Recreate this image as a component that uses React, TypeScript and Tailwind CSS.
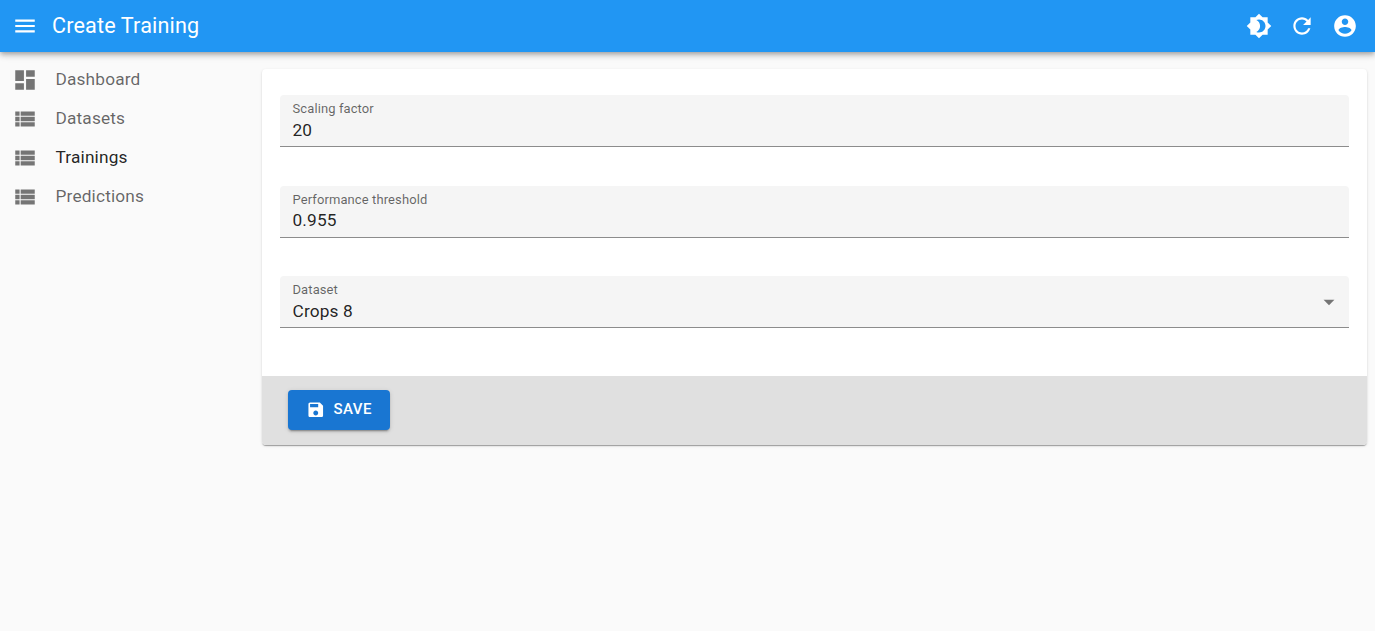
import React from "react";

const paths = {
  menu: "M3 18h18v-2H3v2zm0-5h18v-2H3v2zm0-7v2h18V6H3z",
  dashboard: "M3 13h8V3H3v10zm0 8h8v-6H3v6zm10 0h8V11h-8v10zm0-18v6h8V3h-8z",
  list: "M3 14h4v-4H3v4zm0 5h4v-4H3v4zM3 9h4V5H3v4zm5 5h13v-4H8v4zm0 5h13v-4H8v4zM8 5v4h13V5H8z",
  brightness:
    "M20 8.69V4h-4.69L12 .69 8.69 4H4v4.69L.69 12 4 15.31V20h4.69L12 23.31 15.31 20H20v-4.69L23.31 12 20 8.69zM12 18c-.89 0-1.74-.2-2.5-.55C11.56 16.5 13 14.42 13 12s-1.44-4.5-3.5-5.45C10.26 6.2 11.11 6 12 6c3.31 0 6 2.69 6 6s-2.69 6-6 6z",
  refresh:
    "M17.65 6.35C16.2 4.9 14.21 4 12 4c-4.42 0-7.99 3.58-7.99 8s3.57 8 7.99 8c3.73 0 6.84-2.55 7.73-6h-2.08c-.82 2.33-3.04 4-5.65 4-3.31 0-6-2.69-6-6s2.69-6 6-6c1.66 0 3.14.69 4.22 1.78L13 11h7V4l-2.35 2.35z",
  account:
    "M12 2C6.48 2 2 6.48 2 12s4.48 10 10 10 10-4.48 10-10S17.52 2 12 2zm0 3c1.66 0 3 1.34 3 3s-1.34 3-3 3-3-1.34-3-3 1.34-3 3-3zm0 14.2c-2.5 0-4.71-1.28-6-3.22.03-1.99 4-3.08 6-3.08 1.99 0 5.97 1.09 6 3.08-1.29 1.94-3.5 3.22-6 3.22z",
  save: "M17 3H5c-1.11 0-2 .9-2 2v14c0 1.1.89 2 2 2h14c1.1 0 2-.9 2-2V7l-4-4zm-5 16c-1.66 0-3-1.34-3-3s1.34-3 3-3 3 1.34 3 3-1.34 3-3 3zm3-10H5V5h10v4z",
  arrow: "M7 10l5 5 5-5z",
};

function Icon({ d, className }: { d: string; className: string }) {
  return (
    <svg viewBox="0 0 24 24" fill="currentColor" className={className}>
      <path d={d} />
    </svg>
  );
}

function NavItem({ icon, label, active }: { icon: string; label: string; active?: boolean }) {
  return (
    <div className="flex h-[39px] items-center pl-[12px]">
      <Icon d={icon} className="h-[26px] w-[26px] text-[#757575]" />
      <span
        className={`ml-[17.5px] text-[17.28px] tracking-[0.16px] ${active ? "text-[rgba(0,0,0,0.87)]" : "text-[rgba(0,0,0,0.6)]"}`}
      >
        {label}
      </span>
    </div>
  );
}

function Field({ label, value, select }: { label: string; value: string; select?: boolean }) {
  return (
    <div className="relative h-[51.84px] w-full rounded-t border-b border-[#8c8c8c] bg-[#f5f5f5] px-[13px] pt-[5px]">
      <div className="text-[12.96px] leading-[17px] tracking-[0.12px] text-[rgba(0,0,0,0.6)]">{label}</div>
      <div className="mt-[2.5px] text-[17.28px] leading-[20px] tracking-[0.16px] text-[rgba(0,0,0,0.87)]">{value}</div>
      {select && <Icon d={paths.arrow} className="absolute right-[7px] top-[13px] h-[26px] w-[26px] text-[#757575]" />}
    </div>
  );
}

export default function App() {
  return (
    <div className="min-h-screen bg-[#fafafa] font-['Roboto',sans-serif]">
      <header className="flex h-[52px] items-center bg-[#2196f3] pl-[12px] pr-[17.5px] text-white shadow-[0_2px_4px_-1px_rgba(0,0,0,0.2),0_4px_5px_0_rgba(0,0,0,0.14),0_1px_10px_0_rgba(0,0,0,0.12)]">
        <Icon d={paths.menu} className="h-[26px] w-[26px]" />
        <h1 className="ml-[14px] text-[21.6px] font-normal tracking-[0.15px]">Create Training</h1>
        <div className="ml-auto flex items-center gap-[17px]">
          <Icon d={paths.brightness} className="h-[26px] w-[26px]" />
          <Icon d={paths.refresh} className="h-[26px] w-[26px]" />
          <Icon d={paths.account} className="h-[26px] w-[26px]" />
        </div>
      </header>
      <div className="flex">
        <nav className="w-[262px] shrink-0 pt-[8px]">
          <NavItem icon={paths.dashboard} label="Dashboard" />
          <NavItem icon={paths.list} label="Datasets" />
          <NavItem icon={paths.list} label="Trainings" active />
          <NavItem icon={paths.list} label="Predictions" />
        </nav>
        <main className="mr-[8.5px] mt-[17px] flex-1 overflow-hidden rounded bg-white shadow-[0_2px_1px_-1px_rgba(0,0,0,0.2),0_1px_1px_0_rgba(0,0,0,0.14),0_1px_3px_0_rgba(0,0,0,0.12)]">
          <div className="flex flex-col gap-[38.88px] px-[17.5px] pb-[47.5px] pt-[26px]">
            <Field label="Scaling factor" value="20" />
            <Field label="Performance threshold" value="0.955" />
            <Field label="Dataset" value="Crops 8" select />
          </div>
          <div className="flex h-[69px] items-start bg-[#e0e0e0] px-[26px] pt-[14px]">
            <button className="flex h-10 w-[102px] items-center rounded bg-[#1976d2] pl-[17.5px] text-[15px] font-medium tracking-[0.45px] text-white shadow-[0_3px_1px_-2px_rgba(0,0,0,0.2),0_2px_2px_0_rgba(0,0,0,0.14),0_1px_5px_0_rgba(0,0,0,0.12)]">
              <Icon d={paths.save} className="h-[19.5px] w-[19.5px]" />
              <span className="ml-[8.5px]">SAVE</span>
            </button>
          </div>
        </main>
      </div>
    </div>
  );
}
